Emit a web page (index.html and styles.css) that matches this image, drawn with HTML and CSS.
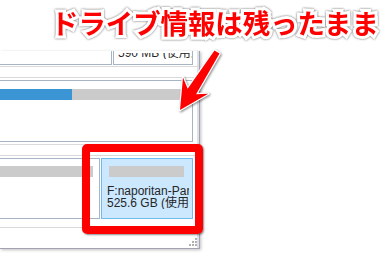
FILE: index.html
```html
<!DOCTYPE html>
<html lang="ja">
<head>
<meta charset="utf-8">
<title>Drive</title>
<link rel="stylesheet" href="styles.css">
</head>
<body>
<div class="stage">
  <div class="window">
    <div class="disk first">
      <div class="box grow notop"></div>
      <div class="box side notop"><div class="clip"><div class="label up">590 MB (使用済み)</div></div></div>
    </div>
    <div class="disk">
      <div class="box grow tall"><div class="bar"><span class="used" style="width:72px"></span></div></div>
    </div>
    <div class="disk last">
      <div class="box grow"><div class="bar"></div></div>
      <div class="box sel">
        <div class="bar inset"></div>
        <div class="label main">F:naporitan-Partition<br>525.6 GB (使用済み)</div>
      </div>
    </div>
    <div class="footer">
      <svg class="grip" width="9" height="9" viewBox="0 0 9 9">
        <rect x="6" y="0" width="2" height="2"/>
        <rect x="3" y="3" width="2" height="2"/>
        <rect x="6" y="3" width="2" height="2"/>
        <rect x="0" y="6" width="2" height="2"/>
        <rect x="3" y="6" width="2" height="2"/>
        <rect x="6" y="6" width="2" height="2"/>
      </svg>
    </div>
  </div>
  <div class="highlight"></div>
  <svg class="arrow" width="388" height="262" viewBox="0 0 388 262">
    <polygon points="214.5,50.4 219.5,53.6 196.1,94.2 208.2,93.7 180,110 183,77.5 187.7,88.8"/>
  </svg>
  <div class="caption">ドライブ情報は残ったまま</div>
</div>
</body>
</html>
```
FILE: styles.css
```css
body {
  margin: 0;
  background: #fff;
  font-family: "Liberation Sans", "Noto Sans CJK JP", sans-serif;
}
.stage {
  position: relative;
  width: 388px;
  height: 262px;
  overflow: hidden;
  background: #fff;
}
.window {
  margin-top: 51px;
  width: 199px;
  height: 197px;
  background: #fff;
  border-right: 1px solid #a2a2b2;
  border-bottom: 1px solid #a2a2b2;
  box-shadow: inset -2px 0 0 #e0e0ea, 1px 1px 3px rgba(0, 0, 0, 0.25);
  display: flex;
  flex-direction: column;
  overflow: hidden;
}
.disk {
  display: flex;
  gap: 1px;
  margin-top: 10px;
  padding: 2px 6px 2px 0;
  border-top: 1px solid #dadada;
  border-bottom: 1px solid #dadada;
  flex: none;
}
.disk.first {
  margin-top: 0;
  padding-top: 0;
  padding-bottom: 1px;
  border-top: 0;
}
.disk.last {
  padding-bottom: 8px;
}
.box {
  border: 1px solid #a7b4c6;
  border-left: 0;
  height: 61px;
  box-sizing: border-box;
  padding: 7px 6px 0 0;
  overflow: hidden;
}
.box.notop {
  border-top: 0;
  height: 14px;
  padding: 0;
}
.box.tall {
  height: 62px;
  padding: 8px 8px 0 0;
}
.grow {
  flex: 1;
}
.side {
  width: 80px;
  padding-left: 4px !important;
  border-left: 1px solid #a7b4c6;
}
.clip {
  margin-top: 2px;
  height: 11px;
  overflow: hidden;
}
.sel {
  width: 92px;
  flex: none;
  background: #cce8ff;
  border: 1px solid #70bbef;
  padding: 7px 3px 0 4px;
}
.bar {
  height: 11px;
  background: #cbcbcb;
  display: flex;
}
.bar.inset {
  margin: 0 5px 0 3px;
}
.used {
  display: block;
  height: 100%;
  background: #3b94d3;
}
.label {
  font-size: 12px;
  line-height: 12px;
  color: #262626;
  white-space: nowrap;
  overflow: hidden;
}
.label.main {
  margin-top: 9px;
  line-height: 11.7px;
  padding-left: 1px;
}
.label.up {
  margin-top: -6px;
  line-height: 12px;
}
.footer {
  flex: 1;
  display: flex;
  justify-content: flex-end;
  align-items: flex-end;
  padding: 0 1px 1px 0;
}
.grip rect {
  fill: #b0b0b0;
}
.highlight {
  position: absolute;
  left: 82px;
  top: 144px;
  width: 121px;
  height: 90px;
  box-sizing: border-box;
  border: 8px solid #ff0000;
  border-radius: 5px;
  box-shadow: 1px 1px 2px rgba(0, 0, 0, 0.45);
}
.arrow {
  position: absolute;
  left: 0;
  top: 0;
  filter: drop-shadow(1px 1px 1px rgba(0, 0, 0, 0.45));
}
.arrow polygon {
  fill: #ff0000;
  stroke: #fff;
  stroke-width: 2.5;
  stroke-linejoin: round;
  paint-order: stroke fill;
}
.caption {
  position: absolute;
  left: 51px;
  top: 9px;
  font-family: "Noto Sans CJK JP", sans-serif;
  font-weight: 700;
  font-size: 27.4px;
  line-height: 1;
  color: #ff0000;
  white-space: nowrap;
  -webkit-text-stroke: 6px #fff;
  paint-order: stroke fill;
  filter: drop-shadow(0 0 1px rgba(0, 0, 0, 0.6));
}
```
